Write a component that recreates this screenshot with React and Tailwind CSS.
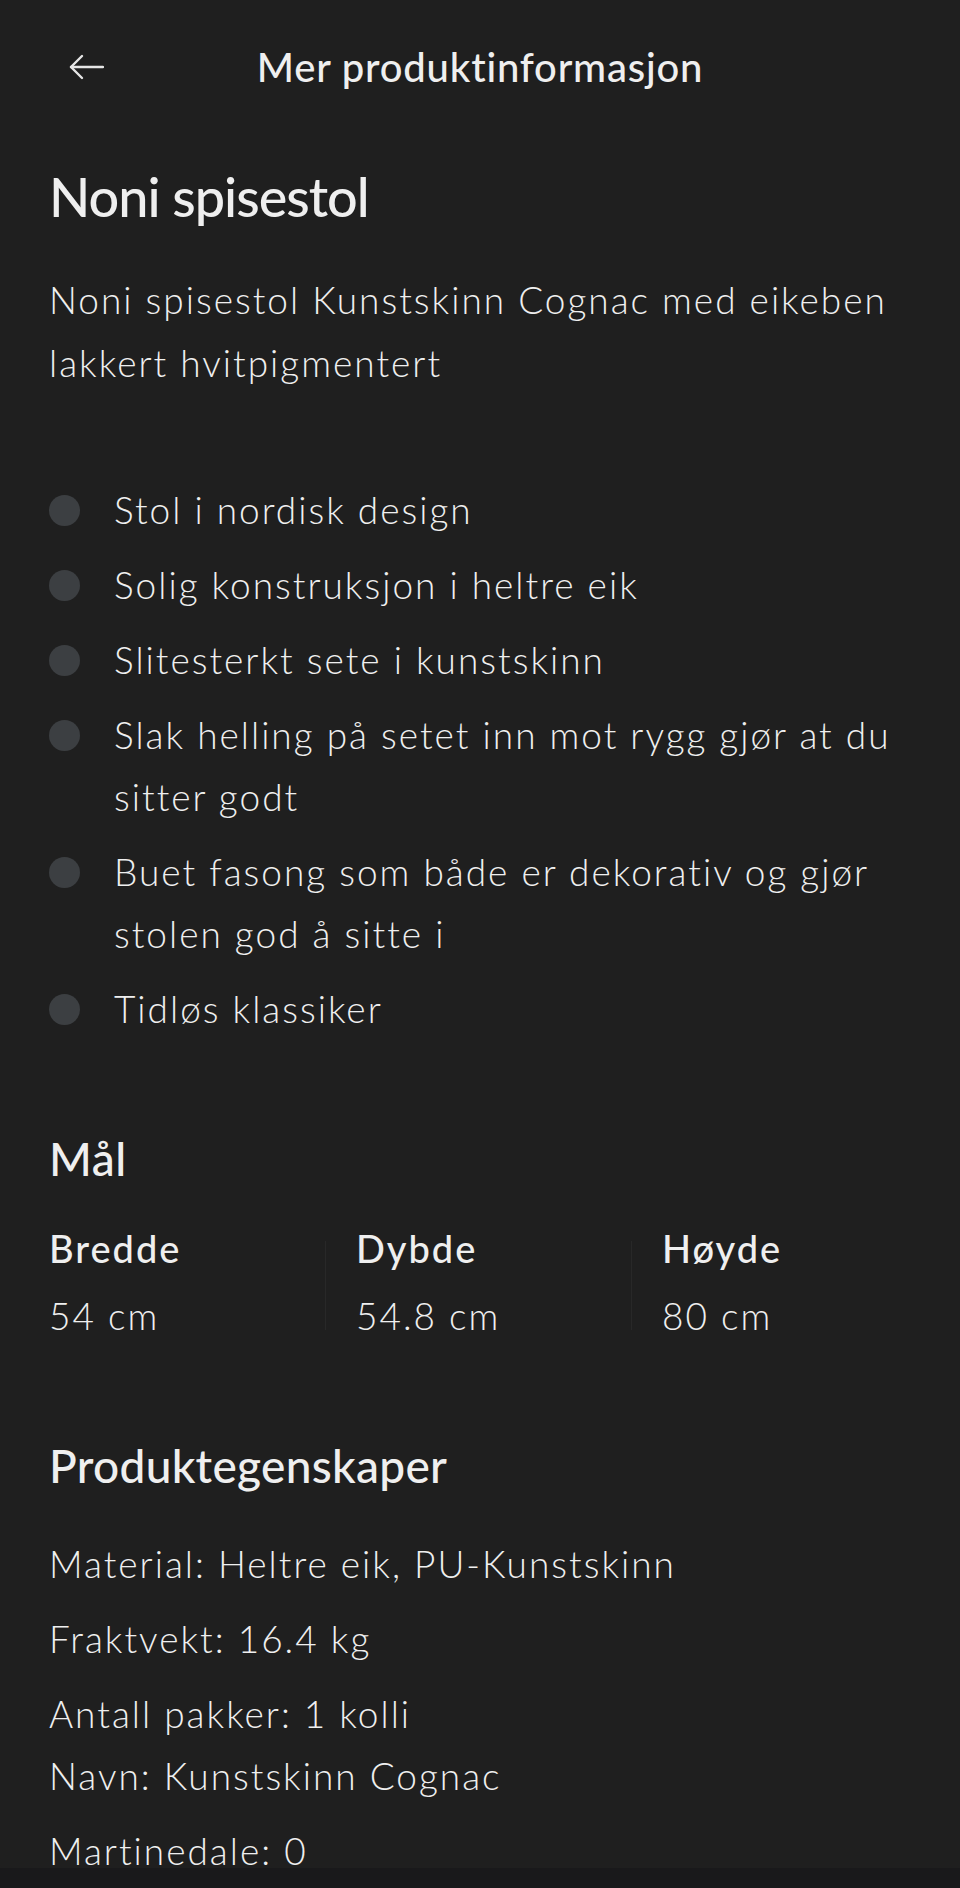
import React from "react";

const bullets = [
  "Stol i nordisk design",
  "Solig konstruksjon i heltre eik",
  "Slitesterkt sete i kunstskinn",
  "Slak helling på setet inn mot rygg gjør at du sitter godt",
  "Buet fasong som både er dekorativ og gjør stolen god å sitte i",
  "Tidløs klassiker",
];

export default function App() {
  return (
    <div
      className="min-h-[1888px] bg-[#1f1f1f] text-[#efefef]"
      style={{ fontFamily: "Lato, 'Open Sans', sans-serif" }}
    >
      <header className="grid h-[134px] grid-cols-[1fr_auto_1fr] items-center">
        <div className="pl-[69px]">
          <svg width="35" height="26" viewBox="0 0 35 26" fill="none" stroke="#e6e6e6" strokeWidth="2.4" strokeLinecap="round" strokeLinejoin="round">
            <path d="M34 13H2" />
            <path d="M13 2L2 13L13 24" />
          </svg>
        </div>
        <h1 className="text-[40px] font-medium leading-none tracking-[0.8px]">Mer produktinformasjon</h1>
        <div />
      </header>

      <main className="px-[49px]">
        <h2 className="mt-[31px] text-[54px] font-medium leading-[1.2] tracking-[-1px]">Noni spisestol</h2>
        <p className="mt-[38px] text-[37px] font-light leading-[63px] tracking-[2px]">
          Noni spisestol Kunstskinn Cognac med eikeben lakkert hvitpigmentert
        </p>

        <ul className="mt-[85px] flex flex-col gap-[13px]">
          {bullets.map((b) => (
            <li key={b} className="flex gap-[34px]">
              <span className="mt-[16px] h-[31px] w-[31px] shrink-0 rounded-full bg-[#3c3f42]" />
              <span className="text-[37px] font-light leading-[62px] tracking-[2px]">{b}</span>
            </li>
          ))}
        </ul>

        <h3 className="mt-[91px] text-[46px] font-medium leading-[1.2] tracking-[0.5px]">Mål</h3>
        <div className="mt-[40px] flex">
          <div className="w-[276px]">
            <div className="text-[38px] font-medium leading-[1.2] tracking-[2px]">Bredde</div>
            <div className="mt-[22px] text-[37px] font-light leading-[1.2] tracking-[2px]">54 cm</div>
          </div>
          <div className="mt-[15px] mb-[8px] w-px bg-[#282828]" />
          <div className="w-[305px] pl-[30px]">
            <div className="text-[38px] font-medium leading-[1.2] tracking-[2px]">Dybde</div>
            <div className="mt-[22px] text-[37px] font-light leading-[1.2] tracking-[2px]">54.8 cm</div>
          </div>
          <div className="mt-[15px] mb-[8px] w-px bg-[#282828]" />
          <div className="flex-1 pl-[30px]">
            <div className="text-[38px] font-medium leading-[1.2] tracking-[2px]">Høyde</div>
            <div className="mt-[22px] text-[37px] font-light leading-[1.2] tracking-[2px]">80 cm</div>
          </div>
        </div>

        <h3 className="mt-[100px] text-[46px] font-medium leading-[1.2] tracking-[0.3px]">Produktegenskaper</h3>
        <div className="mt-[40px] flex flex-col gap-[13px] text-[37px] font-light leading-[62px] tracking-[2px]">
          <p>Material: Heltre eik, PU-Kunstskinn</p>
          <p>Fraktvekt: 16.4 kg</p>
          <p>
            Antall pakker: 1 kolli
            <br />
            Navn: Kunstskinn Cognac
          </p>
          <p>Martinedale: 0</p>
        </div>
      </main>

      <div className="fixed bottom-0 left-0 right-0 h-[20px] bg-[#19191b]" />
    </div>
  );
}
